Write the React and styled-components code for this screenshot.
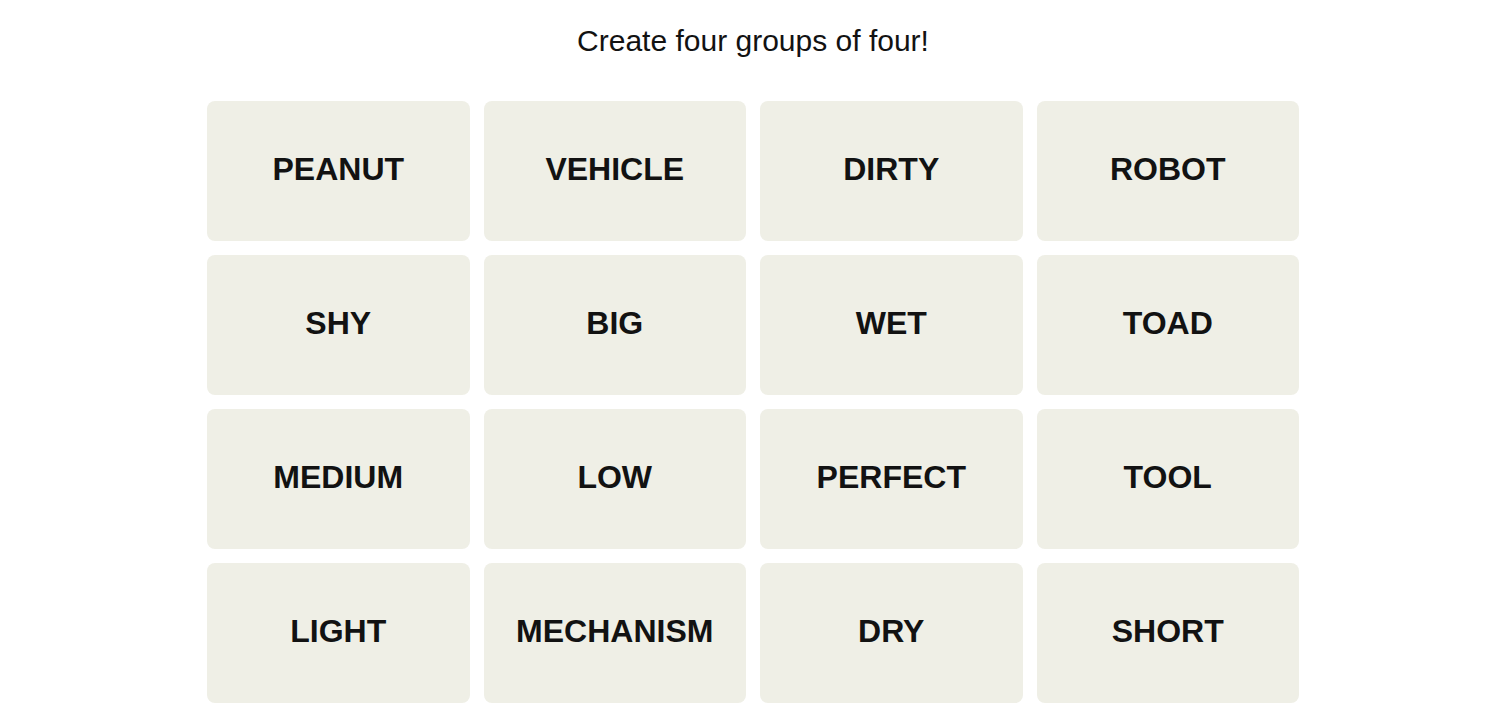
import { createGlobalStyle } from "styled-components";
import styled from "styled-components";

const words = [
  "PEANUT",
  "VEHICLE",
  "DIRTY",
  "ROBOT",
  "SHY",
  "BIG",
  "WET",
  "TOAD",
  "MEDIUM",
  "LOW",
  "PERFECT",
  "TOOL",
  "LIGHT",
  "MECHANISM",
  "DRY",
  "SHORT",
];

const GlobalStyle = createGlobalStyle`
  html, body {
    margin: 0;
    padding: 0;
    background: #ffffff;
    font-family: "Liberation Sans", Arial, sans-serif;
    color: #121212;
  }
`;

function App() {
  return (
    <Wrapper>
      <GlobalStyle />
      <Title>Create four groups of four!</Title>
      <Board>
        {words.map((word) => (
          <Tile key={word}>{word}</Tile>
        ))}
      </Board>
    </Wrapper>
  );
}

const Wrapper = styled.div`
  display: flex;
  flex-direction: column;
  align-items: center;
  padding-top: 23px;
  padding-left: 6px;
  height: 708px;
  box-sizing: border-box;
  overflow: hidden;
`;

const Title = styled.p`
  margin: 0;
  font-size: 30px;
  line-height: 36px;
  font-weight: 400;
  color: #121212;
`;

const Board = styled.div`
  margin-top: 42px;
  width: 1092px;
  display: grid;
  grid-template-columns: repeat(4, 1fr);
  grid-auto-rows: 140px;
  gap: 14px;
`;

const Tile = styled.div`
  display: flex;
  align-items: center;
  justify-content: center;
  background-color: #efefe6;
  border-radius: 8px;
  font-size: 32px;
  font-weight: 700;
  color: #121212;
  padding-bottom: 4px;
  box-sizing: border-box;
`;

export default App;
